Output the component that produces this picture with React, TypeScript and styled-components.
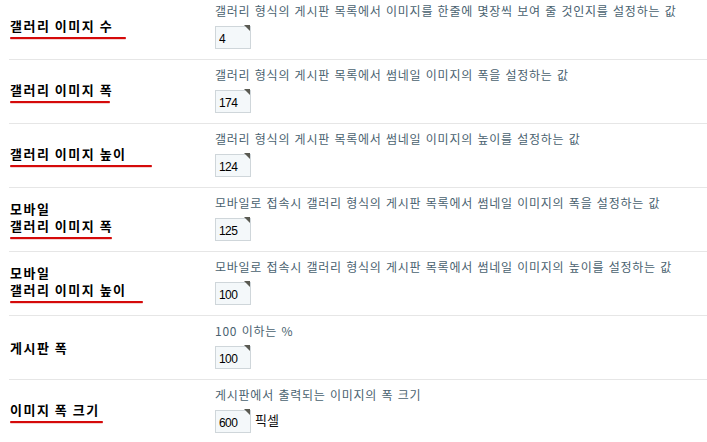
import React from "react";
import styled, { createGlobalStyle } from "styled-components";

const Global = createGlobalStyle`
  html, body { margin: 0; padding: 0; background: #ffffff; }
  body { font-family: "Noto Sans CJK KR", "Noto Sans", sans-serif; overflow: hidden; }
`;

const Page = styled.div`
  margin-top: -4px;
  padding-left: 9px;
  width: 720px;
`;

const Row = styled.div`
  display: grid;
  grid-template-columns: 206px 1fr;
  border-bottom: 1px solid #e6e6e6;
  height: 63px;
`;

const LabelCell = styled.div`
  display: flex;
  flex-direction: column;
  justify-content: center;
  align-items: flex-start;
  padding-left: 1px;
`;

const LabelText = styled.div`
  font-family: "Noto Sans CJK KR", sans-serif;
  font-weight: 700;
  font-size: 13px;
  line-height: 17px;
  letter-spacing: 1.5px;
  color: #000;
  white-space: nowrap;
`;

const Underline = styled.div<{ $w: number }>`
  width: ${(p) => p.$w}px;
  height: 2px;
  margin-top: 3px;
  border-radius: 1px;
  background: #d50a0a;
  box-shadow: 0 0.5px 0.5px rgba(200, 0, 0, 0.35);
`;

const ValueCell = styled.div`
  display: flex;
  flex-direction: column;
  align-items: flex-start;
  padding-top: 6px;
`;

const Desc = styled.div`
  font-family: "Noto Sans CJK KR", sans-serif;
  font-size: 12px;
  line-height: 18px;
  color: #4a6270;
  letter-spacing: 0.75px;
  word-spacing: 1px;
  white-space: nowrap;
`;

const InputLine = styled.div`
  display: flex;
  align-items: center;
  gap: 4px;
  margin-top: 4px;
`;

const FieldWrap = styled.span`
  position: relative;
  display: inline-block;
  width: 36px;
  height: 23px;
  &::after {
    content: "";
    position: absolute;
    top: 1px;
    right: 1px;
    width: 0;
    height: 0;
    border-top: 6px solid #5a5a52;
    border-left: 6px solid transparent;
  }
`;

const Field = styled.input`
  box-sizing: border-box;
  width: 36px;
  height: 23px;
  margin: 0;
  padding: 3px 0 0 3px;
  border: 1px solid #cfd6da;
  background: #f4f8fa;
  font-family: "Liberation Sans", Arial, sans-serif;
  font-size: 12px;
  letter-spacing: -0.6px;
  color: #000;
  outline: none;
`;

const Unit = styled.span`
  font-family: "Noto Sans CJK KR", sans-serif;
  font-size: 13px;
  color: #111;
`;

type RowData = {
  label: string[];
  ul?: number;
  desc: string;
  value: string;
  unit?: string;
};

const rows: RowData[] = [
  { label: ["갤러리 이미지 수"], ul: 116, desc: "갤러리 형식의 게시판 목록에서 이미지를 한줄에 몇장씩 보여 줄 것인지를 설정하는 값", value: "4" },
  { label: ["갤러리 이미지 폭"], ul: 100, desc: "갤러리 형식의 게시판 목록에서 썸네일 이미지의 폭을 설정하는 값", value: "174" },
  { label: ["갤러리 이미지 높이"], ul: 142, desc: "갤러리 형식의 게시판 목록에서 썸네일 이미지의 높이를 설정하는 값", value: "124" },
  { label: ["모바일", "갤러리 이미지 폭"], ul: 102, desc: "모바일로 접속시 갤러리 형식의 게시판 목록에서 썸네일 이미지의 폭을 설정하는 값", value: "125" },
  { label: ["모바일", "갤러리 이미지 높이"], ul: 133, desc: "모바일로 접속시 갤러리 형식의 게시판 목록에서 썸네일 이미지의 높이를 설정하는 값", value: "100" },
  { label: ["게시판 폭"], desc: "100 이하는 %", value: "100" },
  { label: ["이미지 폭 크기"], ul: 93, desc: "게시판에서 출력되는 이미지의 폭 크기", value: "600", unit: "픽셀" },
];

export default function App() {
  return (
    <>
      <Global />
      <Page>
        {rows.map((r, i) => (
          <Row key={i}>
            <LabelCell>
              {r.label.map((l, j) => (
                <LabelText key={j}>{l}</LabelText>
              ))}
              {r.ul ? <Underline $w={r.ul} /> : null}
            </LabelCell>
            <ValueCell>
              <Desc>{r.desc}</Desc>
              <InputLine>
                <FieldWrap>
                  <Field defaultValue={r.value} />
                </FieldWrap>
                {r.unit ? <Unit>{r.unit}</Unit> : null}
              </InputLine>
            </ValueCell>
          </Row>
        ))}
      </Page>
    </>
  );
}
